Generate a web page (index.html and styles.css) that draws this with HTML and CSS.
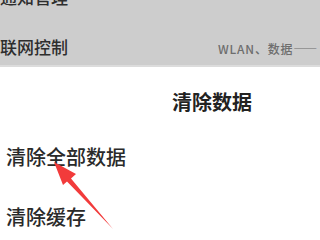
FILE: index.html
```html
<!DOCTYPE html>
<html lang="zh-CN">
<head>
  <meta charset="UTF-8" />
  <meta name="viewport" content="width=device-width, initial-scale=1.0" />
  <title>清除数据</title>
  <link rel="stylesheet" href="styles.css">
</head>
<body>
  <div class="screen">
    <div class="settings">
      <div class="row">
        <span class="label">通知管理</span>
      </div>
      <div class="row last">
        <span class="label">联网控制</span>
        <span class="value">WLAN、数据——</span>
      </div>
    </div>

    <div class="dialog">
      <div class="dialog-title">清除数据</div>
      <div class="option">清除全部数据</div>
      <div class="option">清除缓存</div>
    </div>

    <svg class="arrow" width="320" height="240" viewBox="0 0 320 240">
      <polygon points="54,162 76,174 71,178.5 113,229 67,181.5 63,185" fill="#f23b3b" />
    </svg>
  </div>
</body>
</html>
```

FILE: styles.css
```css
body {
  margin: 0;
  font-family: "Noto Sans CJK SC", "Noto Sans", sans-serif;
  background: #fff;
  color: #333;
}
.screen {
  position: relative;
  width: 320px;
  height: 240px;
  overflow: hidden;
}
.settings {
  margin-top: -27px;
  background: #cdcdcd;
  border-bottom: 2px solid #dcdcdc;
}
.row {
  display: grid;
  grid-template-columns: 218px 1fr;
  align-items: center;
  padding: 12px 0;
  line-height: 24px;
  overflow: hidden;
}
.row.last {
  padding-bottom: 4px;
}
.label {
  font-size: 17px;
  font-weight: 500;
  color: #2e2e2e;
}
.value {
  font-size: 12px;
  font-weight: 500;
  letter-spacing: 0.8px;
  color: #6e6e6e;
  white-space: nowrap;
  padding-top: 4px;
}
.dialog {
  padding-top: 23px;
}
.dialog-title {
  padding-left: 172px;
  font-size: 20px;
  font-weight: bold;
  line-height: 24px;
  color: #222;
  margin-bottom: 13px;
}
.option {
  padding: 18px 0 18px 6px;
  font-size: 20px;
  font-weight: 500;
  line-height: 24px;
  color: #2a2a2a;
}
.arrow {
  position: absolute;
  top: 0;
  left: 0;
  pointer-events: none;
}
```
